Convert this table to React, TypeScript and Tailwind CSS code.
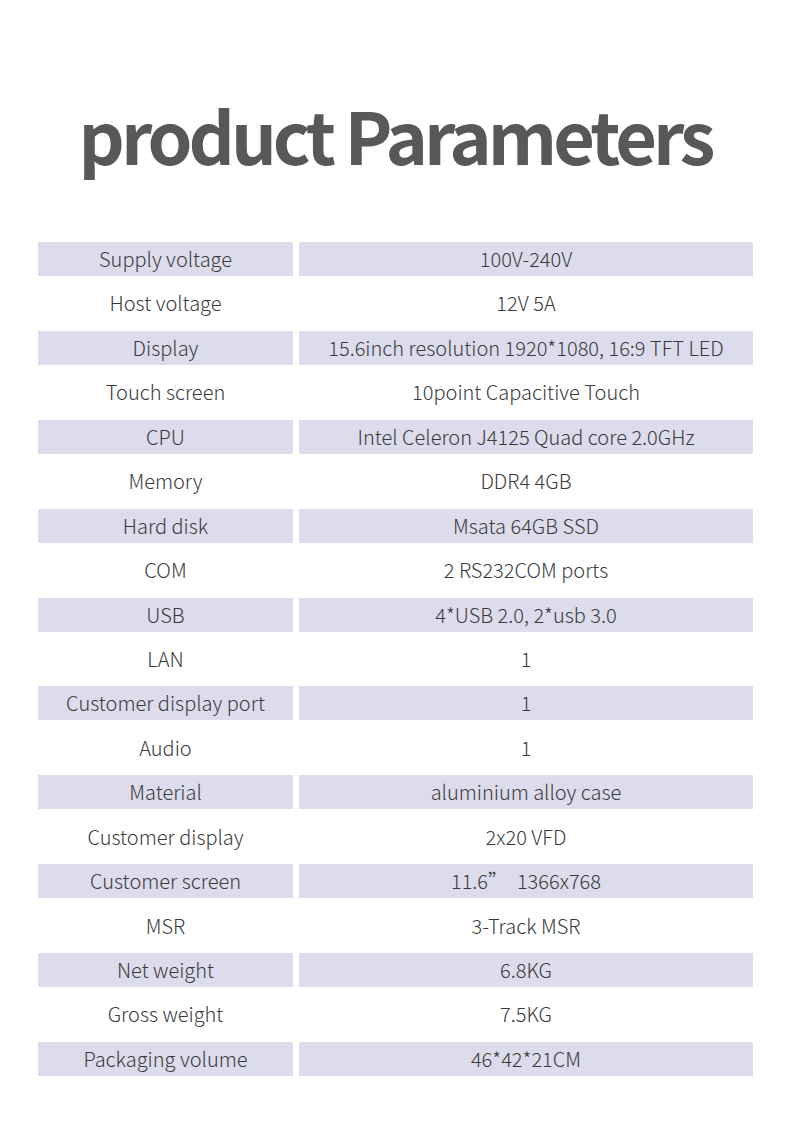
const specs: [string, string][] = [
  ["Supply voltage", "100V-240V"],
  ["Host voltage", "12V 5A"],
  ["Display", "15.6inch resolution 1920*1080, 16:9 TFT LED"],
  ["Touch screen", "10point Capacitive Touch"],
  ["CPU", "Intel Celeron J4125 Quad core 2.0GHz"],
  ["Memory", "DDR4 4GB"],
  ["Hard disk", "Msata 64GB SSD"],
  ["COM", "2 RS232COM ports"],
  ["USB", "4*USB 2.0, 2*usb 3.0"],
  ["LAN", "1"],
  ["Customer display port", "1"],
  ["Audio", "1"],
  ["Material", "aluminium alloy case"],
  ["Customer display", "2x20 VFD"],
  ["Customer screen", "11.6\u201D\u00A0 1366x768"],
  ["MSR", "3-Track MSR"],
  ["Net weight", "6.8KG"],
  ["Gross weight", "7.5KG"],
  ["Packaging volume", "46*42*21CM"],
];

export default function App() {
  return (
    <main className="w-[790px] h-[1125px] bg-white font-['Noto_Sans_CJK_SC','Noto_Sans',sans-serif]">
      <h1 className="pt-[84px] text-center text-[72px] leading-[100px] font-bold tracking-[-4px] text-[#585858]">
        product Parameters
      </h1>
      <section className="mt-[58px] px-[38px] flex flex-col gap-y-[10.45px]">
        {specs.map(([label, value], i) => {
          const shaded = i % 2 === 0;
          return (
            <div key={label} className="grid grid-cols-[255px_454px] gap-x-[6px] h-[34px]">
              <div
                className={`flex items-center justify-center text-[20px] font-light text-[#3a3a3a] ${
                  shaded ? "bg-[#dddcec]" : ""
                }`}
              >
                {label}
              </div>
              <div
                className={`flex items-center justify-center text-[20px] font-light text-[#3a3a3a] whitespace-pre ${
                  shaded ? "bg-[#dddcec]" : ""
                }`}
              >
                {value}
              </div>
            </div>
          );
        })}
      </section>
    </main>
  );
}
